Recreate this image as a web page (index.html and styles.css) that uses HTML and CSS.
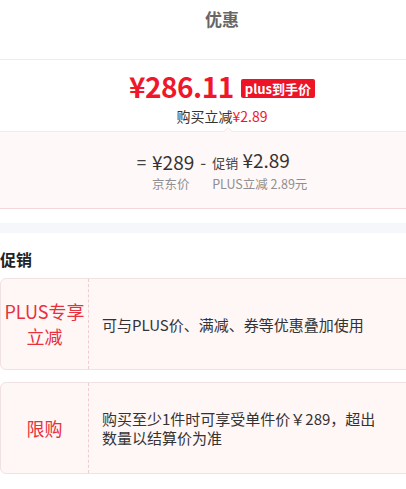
FILE: index.html
```html
<!DOCTYPE html>
<html lang="zh-CN">
<head>
    <meta charset="UTF-8" />
    <meta name="viewport" content="width=device-width, initial-scale=1" />
    <title>优惠</title>
    <link rel="stylesheet" href="styles.css">
</head>
<body>
<div class="page">
    <div class="header">优惠</div>

    <div class="price-card">
        <div class="price-row">
            <span class="price">¥286.11</span>
            <span class="badge">plus到手价</span>
        </div>
        <div class="saving">购买立减<span class="red">¥2.89</span></div>

        <div class="calc">
            <div class="calc-grid">
                <span class="op">=</span>
                <span class="num">¥289</span>
                <span class="op">-</span>
                <span class="num"><small>促销</small> ¥2.89</span>
                <span></span>
                <span class="note">京东价</span>
                <span></span>
                <span class="note">PLUS立减 2.89元</span>
            </div>
        </div>
    </div>

    <div class="band"></div>

    <div class="section-title">促销</div>

    <div class="promo">
        <div class="promo-label">PLUS专享<br>立减</div>
        <div class="promo-desc">可与PLUS价、满减、券等优惠叠加使用</div>
    </div>

    <div class="promo">
        <div class="promo-label">限购</div>
        <div class="promo-desc">购买至少1件时可享受单件价￥289，超出数量以结算价为准</div>
    </div>
</div>
</body>
</html>
```

FILE: styles.css
```css
html, body {
    overflow: hidden;
}
body {
    margin: 0;
    font-family: "Noto Sans CJK SC", "Noto Sans", sans-serif;
    color: #333;
    background-color: white;
}
.page {
    width: 444px;
}
.header {
    height: 38px;
    line-height: 38px;
    margin-bottom: 21px;
    text-align: center;
    font-size: 17px;
    font-weight: bold;
    color: #666;
}
.price-card {
    border-top: 1px solid #f1e9ea;
    padding-top: 8px;
}
.price-row {
    display: flex;
    justify-content: center;
    align-items: center;
    gap: 7px;
    height: 36px;
}
.price {
    font-size: 28px;
    font-weight: bold;
    color: #f1172b;
    letter-spacing: -0.5px;
}
.badge {
    margin-top: 5px;
    padding: 0 4px;
    height: 19px;
    line-height: 19px;
    border-radius: 2px;
    background-color: #ee1428;
    color: white;
    font-size: 13px;
    font-weight: bold;
}
.saving {
    text-align: center;
    font-size: 14px;
    line-height: 20px;
    margin-top: 2px;
    color: #333;
}
.red {
    color: #f1172b;
}
.calc {
    position: relative;
    margin-top: 5px;
    padding: 16px 0 15px;
    background-color: #fff8f8;
    border-top: 1px solid #fae8e9;
    border-bottom: 1px solid #f3d9dc;
}
.calc::before {
    content: "";
    position: absolute;
    top: -5px;
    left: 223px;
    border: 5px solid transparent;
    border-top: 0;
    border-bottom-color: #f7e3e5;
}
.calc::after {
    content: "";
    position: absolute;
    top: -4px;
    left: 224px;
    border: 4px solid transparent;
    border-top: 0;
    border-bottom-color: #fff8f8;
}
.calc-grid {
    display: grid;
    grid-template-columns: auto auto auto auto;
    justify-content: center;
    column-gap: 6px;
    align-items: center;
}
.op {
    font-size: 17px;
    line-height: 24px;
    color: #444;
}
.num {
    font-size: 19px;
    line-height: 24px;
    color: #333;
}
.num small {
    font-size: 13px;
    color: #444;
}
.note {
    font-size: 12.5px;
    line-height: 18px;
    color: #8f8f8f;
}
.band {
    margin-top: 14px;
    height: 10px;
    background-color: #f6f7fb;
}
.section-title {
    padding: 14px 0 7px;
    line-height: 24px;
    font-size: 16px;
    font-weight: bold;
    color: #222;
}
.promo {
    display: flex;
    min-height: 90px;
    margin-bottom: 12px;
    border: 1px solid #f0e2e3;
    border-radius: 6px;
    background-color: #fff6f6;
}
.promo-label {
    width: 87px;
    flex-shrink: 0;
    display: flex;
    align-items: center;
    justify-content: center;
    text-align: center;
    border-right: 1px dashed #eecdd1;
    font-size: 18px;
    line-height: 25px;
    color: #e8313c;
}
.promo-desc {
    display: flex;
    align-items: center;
    padding: 0 64px 0 13px;
    font-size: 15px;
    line-height: 19px;
    color: #333;
}
```
